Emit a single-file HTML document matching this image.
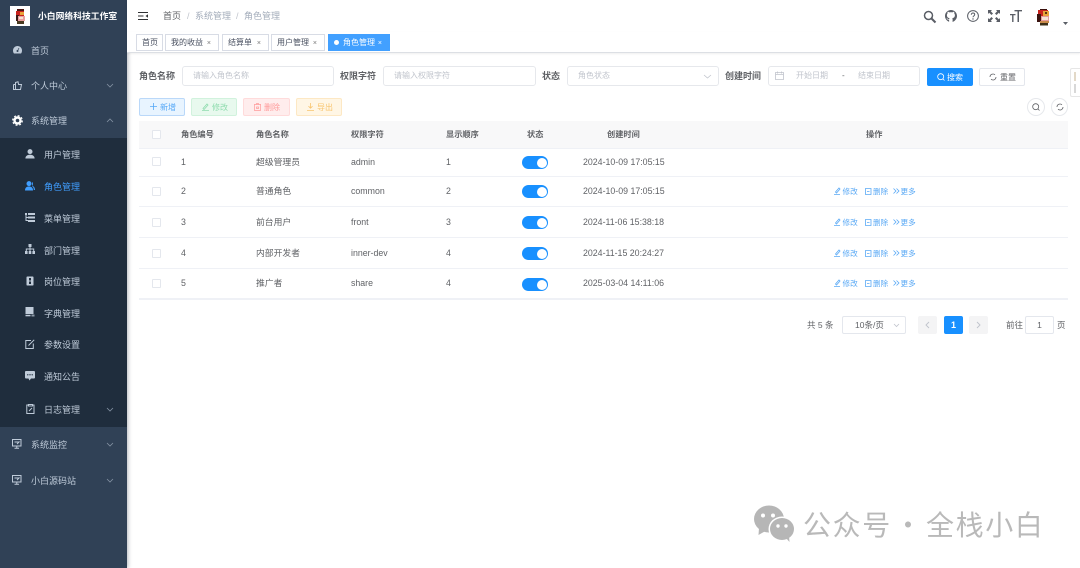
<!DOCTYPE html>
<html lang="zh-CN">
<head>
<meta charset="utf-8">
<title>角色管理</title>
<style>
*{box-sizing:border-box;margin:0;padding:0}
html,body{width:1080px;height:568px;overflow:hidden;background:#fff}
body{position:relative;font-family:"Liberation Sans","Noto Sans CJK SC",sans-serif;font-size:9px;color:#606266}
#w{position:absolute;left:0;top:0;width:1080px;height:568px;filter:blur(.3px)}
.a{position:absolute;white-space:nowrap;line-height:12px}
.box{position:absolute}
svg{position:absolute;overflow:visible}
#side{position:absolute;left:0;top:0;width:127px;height:568px;background:#304156;box-shadow:1px 0 4px rgba(0,21,41,.3)}
#sub{position:absolute;left:0;top:138px;width:127px;height:289px;background:#1f2d3d}
.m{position:absolute;color:#bfcbd9;white-space:nowrap;line-height:12px;font-size:9px}
.i{fill:#bfcbd9}
.l{fill:none;stroke:#bfcbd9;stroke-width:1}
.ch{fill:none;stroke:#8492a3;stroke-width:.8}
.tag{position:absolute;top:34px;height:17px;border:1px solid #d8dce5;background:#fff;color:#495060;font-size:8px;line-height:16px;padding-left:5px;white-space:nowrap}
.tag b{font-weight:400;position:absolute;right:7px;top:1px;color:#777;font-size:7px}
.inp{position:absolute;height:20px;top:66px;border:1px solid #e6e8ec;border-radius:3px;background:#fff;color:#c0c4cc;font-size:8px;line-height:18px;padding-left:10px;white-space:nowrap}
.lab{position:absolute;top:70px;font-weight:700;color:#606266;line-height:12px;font-size:9px;white-space:nowrap}
.btn{position:absolute;top:98px;height:18px;border-radius:2px;font-size:8px;line-height:16px;border:1px solid;white-space:nowrap}
.btn span{position:absolute;left:20px;top:1px}
.th{position:absolute;top:129px;font-weight:700;color:#606266;font-size:8.2px;line-height:12px;white-space:nowrap}
.td{position:absolute;color:#606266;font-size:8.8px;line-height:12px;white-space:nowrap}
.hr{position:absolute;left:139px;width:929px;height:1px;background:#eff1f6}
.cb{position:absolute;left:152px;width:9px;height:9px;border:1px solid #e4e7ed;border-radius:1px;background:#fff}
.sw{position:absolute;left:522px;width:26px;height:13px;border-radius:7px;background:#1890ff}
.sw i{position:absolute;right:1.5px;top:1.5px;width:10px;height:10px;border-radius:50%;background:#fff}
.act{position:absolute;color:#5aa9f5;font-size:7.6px;line-height:12px;white-space:nowrap}
.ai{fill:none;stroke:#5aa9f5;stroke-width:.8}
.pg{position:absolute;top:316px;width:19px;height:18px;border-radius:2px;background:#f4f4f5}
.wm{position:absolute;top:505px;font-family:"Noto Sans CJK SC","WenQuanYi Zen Hei",sans-serif;font-weight:400;font-size:28px;line-height:38px;color:#b9b9b9;white-space:nowrap;letter-spacing:1.6px}
</style>
</head>
<body>
<div id="w">

<div id="side">
  <div class="box" style="left:10px;top:6px;width:20px;height:20px;background:#fff"></div>
  <svg style="left:14px;top:9px" width="13" height="16" viewBox="0 0 13 16">
    <rect x="3" y="0" width="7" height="3" fill="#4a1512"/><rect x="2" y="2" width="8" height="5" fill="#c8221c"/><rect x="6" y="3" width="4" height="3" fill="#e8a33a"/><rect x="2" y="6" width="3" height="6" fill="#3b1a16"/><rect x="4" y="7" width="7" height="5" fill="#e8a0a0"/><rect x="5" y="8" width="4" height="2" fill="#f6e0d0"/><rect x="3" y="12" width="7" height="3" fill="#4a3a20"/>
  </svg>
  <div class="a" style="left:38px;top:10px;color:#fff;font-weight:700;font-size:8.8px">小白网络科技工作室</div>

  <svg style="left:13px;top:46px" width="9" height="8" viewBox="0 0 9 8"><path class="i" d="M4.500 0C2 0 0 2 0 4.500 0 6 .5 7 1 7.500h7c.5-.5 1-1.500 1-3C9 2 7 0 4.500 0z"/><circle cx="4.500" cy="5" r="1" fill="#304156"/><path d="M4.500 5L6 2" stroke="#304156" stroke-width=".7"/></svg>
  <div class="m" style="left:31px;top:45px">首页</div>

  <svg style="left:13px;top:81px" width="9" height="9" viewBox="0 0 9 9"><path class="l" d="M.5 3.500h2V1.500L5 .8l.6 2.700h2.900L7.500 8.500H2.500v-5M.5 3.500v5h2"/></svg>
  <div class="m" style="left:31px;top:80px">个人中心</div>
  <svg style="left:106px;top:83px" width="8" height="5" viewBox="0 0 8 5"><path class="ch" d="M1 1l3 3 3-3"/></svg>

  <svg style="left:12px;top:115px" width="11" height="11" viewBox="0 0 11 11"><circle cx="5.500" cy="5.500" r="3" fill="none" stroke="#fff" stroke-width="2.400"/><circle cx="5.500" cy="5.500" r="4.800" fill="none" stroke="#fff" stroke-width="1.200" stroke-dasharray="2 1.770"/></svg>
  <div class="m" style="left:31px;top:115px">系统管理</div>
  <svg style="left:106px;top:118px" width="8" height="5" viewBox="0 0 8 5"><path class="ch" d="M1 4l3-3 3 3"/></svg>

  <div id="sub"></div>

  <svg style="left:25px;top:149px" width="10" height="10" viewBox="0 0 10 10"><circle class="i" cx="5" cy="2.600" r="2.500"/><path class="i" d="M.4 9.500c0-2.500 1.900-3.800 4.600-3.800s4.600 1.300 4.600 3.800z"/></svg>
  <div class="m" style="left:44px;top:149px">用户管理</div>

  <svg style="left:25px;top:181px" width="10" height="10" viewBox="0 0 10 10"><circle fill="#409eff" cx="4" cy="2.600" r="2.500"/><path fill="#409eff" d="M0 9.500c0-2.800 1.500-4 4-4s4 1.200 4 4z"/><path fill="#409eff" d="M7 1c1.300.5 1.300 3 0 3.700C8.800 5 10 6.500 10 9H8.800C8.800 7 8 6 7 5z"/></svg>
  <div class="m" style="left:44px;top:181px;color:#409eff">角色管理</div>

  <svg style="left:25px;top:213px" width="10" height="9" viewBox="0 0 10 9"><rect class="i" x="0" y="0" width="2" height="2"/><rect class="i" x="3" y="0" width="7" height="2"/><rect class="i" x="3" y="3.500" width="7" height="2"/><rect class="i" x="3" y="7" width="7" height="2"/><path class="l" stroke-width=".7" d="M1 2v5.500h2M1 4.500h2"/></svg>
  <div class="m" style="left:44px;top:213px">菜单管理</div>

  <svg style="left:25px;top:244px" width="10" height="10" viewBox="0 0 10 10"><rect class="i" x="3.500" y="0" width="3" height="3"/><rect class="i" x="0" y="7" width="2.600" height="3"/><rect class="i" x="3.700" y="7" width="2.600" height="3"/><rect class="i" x="7.400" y="7" width="2.600" height="3"/><path class="l" stroke-width=".7" d="M5 3v4M1.300 7V5h7.400v2"/></svg>
  <div class="m" style="left:44px;top:245px">部门管理</div>

  <svg style="left:26px;top:276px" width="8" height="10" viewBox="0 0 8 10"><rect class="i" x="0.500" y="0.500" width="7" height="9" rx=".8"/><rect x="3" y="2" width="2" height="2.500" fill="#1f2d3d"/><rect x="3" y="5.500" width="2" height="2.500" fill="#1f2d3d"/></svg>
  <div class="m" style="left:44px;top:276px">岗位管理</div>

  <svg style="left:25px;top:307px" width="10" height="10" viewBox="0 0 10 10"><rect class="i" x="0.500" y="0" width="8" height="7"/><rect class="i" x="0.500" y="7.800" width="5" height="1.500"/><rect x="6.500" y="7.500" width="3" height="2" fill="#8c99a8"/></svg>
  <div class="m" style="left:44px;top:308px">字典管理</div>

  <svg style="left:25px;top:339px" width="10" height="10" viewBox="0 0 10 10"><path class="l" d="M6 1.500H.8v8h7.500V4.500"/><path class="l" d="M3.500 6.500L9.200.8"/></svg>
  <div class="m" style="left:44px;top:339px">参数设置</div>

  <svg style="left:25px;top:371px" width="10" height="10" viewBox="0 0 10 10"><path class="i" d="M1 0h8c.6 0 1 .4 1 1v5.500c0 .6-.4 1-1 1H6L4.500 9.500 3.500 7.500H1c-.6 0-1-.4-1-1V1c0-.6.4-1 1-1z"/><circle cx="2.800" cy="3.800" r=".7" fill="#1f2d3d"/><circle cx="5" cy="3.800" r=".7" fill="#1f2d3d"/><circle cx="7.200" cy="3.800" r=".7" fill="#1f2d3d"/></svg>
  <div class="m" style="left:44px;top:371px">通知公告</div>

  <svg style="left:26px;top:404px" width="9" height="10" viewBox="0 0 9 10"><path class="l" d="M2.500 1H.8v8.500h7.200V1H6.500M2.500.5h4v1.500h-4z"/><path class="l" d="M3 7l3-3"/></svg>
  <div class="m" style="left:44px;top:404px">日志管理</div>
  <svg style="left:106px;top:407px" width="8" height="5" viewBox="0 0 8 5"><path class="ch" d="M1 1l3 3 3-3"/></svg>

  <svg style="left:12px;top:439px" width="10" height="10" viewBox="0 0 10 10"><path class="l" d="M.5.500h8.500v6.500H.5z"/><path class="l" d="M2.500 9.200h4.500M4.800 7v2.200M2.500 3h4.500L5 5"/></svg>
  <div class="m" style="left:31px;top:439px">系统监控</div>
  <svg style="left:106px;top:442px" width="8" height="5" viewBox="0 0 8 5"><path class="ch" d="M1 1l3 3 3-3"/></svg>

  <svg style="left:12px;top:475px" width="10" height="10" viewBox="0 0 10 10"><path class="l" d="M.5.500h8.500v6.500H.5z"/><path class="l" d="M2.500 9.200h4.500M4.800 7v2.200M2.500 3h4.500L5 5"/></svg>
  <div class="m" style="left:31px;top:475px">小白源码站</div>
  <svg style="left:106px;top:478px" width="8" height="5" viewBox="0 0 8 5"><path class="ch" d="M1 1l3 3 3-3"/></svg>
</div>

<!-- navbar -->
<div class="box" style="left:127px;top:0;width:953px;height:32px;background:#fff;box-shadow:0 1px 3px rgba(0,21,41,.08)"></div>
<svg style="left:138px;top:12px" width="10" height="8" viewBox="0 0 10 8"><path d="M0 .5h10M0 7.500h10M0 4h5.500" stroke="#303133" stroke-width="1"/><path d="M10 2.300v3.400L7.500 4z" fill="#303133"/></svg>
<div class="a" style="left:163px;top:10px;color:#606266">首页</div>
<div class="a" style="left:187px;top:10px;color:#c0c4cc">/</div>
<div class="a" style="left:195px;top:10px;color:#a3acba">系统管理</div>
<div class="a" style="left:236px;top:10px;color:#c0c4cc">/</div>
<div class="a" style="left:244px;top:10px;color:#a3acba">角色管理</div>

<svg style="left:923px;top:10px" width="14" height="14" viewBox="0 0 14 14"><circle cx="5.500" cy="5.500" r="4" fill="none" stroke="#5a5e66" stroke-width="1.500"/><path d="M8.500 8.500l4 4" stroke="#5a5e66" stroke-width="2"/></svg>
<svg style="left:945px;top:10px" width="12" height="12" viewBox="0 0 12 12"><path fill="#5a5e66" d="M6 0C2.700 0 0 2.700 0 6c0 2.600 1.700 4.900 4.100 5.700v-1.900c-1.300.2-1.800-.3-2.100-1-.2-.4-.5-.7-.8-.9.700 0 1.300.5 1.600 1 .4.500 1 .5 1.400.2 0-.4.200-.7.400-.9-1.700-.3-2.700-1.200-2.700-3 0-.7.200-1.300.7-1.800-.2-.5-.1-1.200.1-1.700.7 0 1.200.3 1.700.7.800-.2 2.200-.2 3 0 .5-.4 1-.7 1.700-.7.200.5.300 1.200.1 1.700.5.500.7 1.100.7 1.800 0 1.800-1 2.700-2.700 3 .3.300.4.700.4 1.200v2.600C10.300 10.900 12 8.600 12 6c0-3.300-2.700-6-6-6z"/></svg>
<svg style="left:967px;top:10px" width="12" height="12" viewBox="0 0 12 12"><circle cx="6" cy="6" r="5.400" fill="none" stroke="#5a5e66" stroke-width="1"/><path d="M4.300 4.700C4.300 3.700 5 3 6 3s1.700.7 1.700 1.600c0 1.300-1.700 1.300-1.700 2.700" fill="none" stroke="#5a5e66" stroke-width="1"/><circle cx="6" cy="9" r=".7" fill="#5a5e66"/></svg>
<svg style="left:988px;top:10px" width="12" height="12" viewBox="0 0 12 12"><path d="M0 0h4L2.800 1.200 5 3.500 3.500 5 1.200 2.800 0 4zM12 0v4l-1.200-1.200L8.500 5 7 3.500l2.200-2.300L8 0zM0 12V8l1.200 1.200L3.500 7 5 8.500 2.800 10.800 4 12zM12 12H8l1.200-1.200L7 8.500 8.500 7l2.300 2.200L12 8z" fill="#5a5e66"/></svg>
<svg style="left:1010px;top:10px" width="12" height="12" viewBox="0 0 12 12"><path d="M4.500 0h7.500v1.400H9V12H7.500V1.400H4.500zM0 4h5.500v1.300H3.500V12H2.100V5.300H0z" fill="#5a5e66"/></svg>
<svg style="left:1037px;top:9px" width="14" height="17" viewBox="0 0 14 17">
  <rect x="3" y="0" width="7" height="2" fill="#3a0f0c"/><rect x="1" y="1" width="10" height="6" fill="#c8221c"/><rect x="6" y="2" width="6" height="5" fill="#e8a33a"/><rect x="8" y="3" width="2" height="2" fill="#5a3210"/><rect x="0" y="5" width="4" height="8" fill="#3b1410"/><rect x="4" y="7" width="8" height="5" fill="#e59a9a"/><rect x="5" y="8" width="6" height="3" fill="#f6e4d6"/><rect x="3" y="12" width="9" height="2" fill="#c98a4a"/><rect x="3" y="14" width="8" height="2.500" fill="#3e3018"/>
</svg>
<svg style="left:1063px;top:22px" width="5" height="3" viewBox="0 0 5 3"><path d="M0 0h5L2.500 3z" fill="#5a5e66"/></svg>

<!-- tags -->
<div class="box" style="left:127px;top:32px;width:953px;height:21px;background:#fff;border-bottom:1px solid #dcdfe4;box-shadow:0 1px 2px rgba(0,0,0,.07)"></div>
<div class="tag" style="left:136px;width:27px">首页</div>
<div class="tag" style="left:165px;width:54px">我的收益<b>×</b></div>
<div class="tag" style="left:222px;width:47px">结算单<b>×</b></div>
<div class="tag" style="left:271px;width:54px">用户管理<b>×</b></div>
<div class="tag" style="left:328px;width:62px;background:#42a0ff;border-color:#42a0ff;color:#fff;padding-left:14px">角色管理<b style="color:#fff">×</b><i style="position:absolute;left:5px;top:5px;width:5px;height:5px;border-radius:50%;background:#fff"></i></div>

<!-- form -->
<div class="lab" style="left:139px">角色名称</div>
<div class="inp" style="left:182px;width:152px">请输入角色名称</div>
<div class="lab" style="left:340px">权限字符</div>
<div class="inp" style="left:383px;width:153px">请输入权限字符</div>
<div class="lab" style="left:542px">状态</div>
<div class="inp" style="left:567px;width:152px">角色状态</div>
<svg style="left:703px;top:74px" width="9" height="5" viewBox="0 0 9 5"><path d="M1 1l3.500 3L8 1" fill="none" stroke="#c0c4cc" stroke-width=".8"/></svg>
<div class="lab" style="left:725px">创建时间</div>
<div class="inp" style="left:768px;width:152px"></div>
<svg style="left:775px;top:71px" width="9" height="9" viewBox="0 0 9 9"><path d="M.5 1.500h8v7h-8zM.5 3.500h8M2.500.5v2M6.500.5v2" fill="none" stroke="#c0c4cc" stroke-width=".8"/></svg>
<div class="a" style="left:796px;top:70px;font-size:8px;color:#c0c4cc">开始日期</div>
<div class="a" style="left:842px;top:70px;font-size:8px;color:#606266">-</div>
<div class="a" style="left:858px;top:70px;font-size:8px;color:#c0c4cc">结束日期</div>

<div class="btn" style="left:927px;top:68px;width:46px;background:#1890ff;border-color:#1890ff;color:#fff"><span style="left:19px">搜索</span></div>
<svg style="left:937px;top:73px" width="8" height="8" viewBox="0 0 8 8"><circle cx="3.700" cy="3.700" r="3" fill="none" stroke="#fff" stroke-width=".8"/><path d="M6 6l1.500 1.500" stroke="#fff" stroke-width=".8"/></svg>
<div class="btn" style="left:979px;top:68px;width:46px;background:#fff;border-color:#e4e7ed;color:#606266"><span style="left:20px">重置</span></div>
<svg style="left:989px;top:73px" width="8" height="8" viewBox="0 0 8 8"><path d="M1 4a3 3 0 0 1 5-2.200M7 4a3 3 0 0 1-5 2.200" fill="none" stroke="#606266" stroke-width=".8"/></svg>

<div class="box" style="left:1070px;top:68px;width:10px;height:29px;background:#fff;border:1px solid #e6e6e6;border-right:0;border-radius:2px 0 0 2px"></div>
<div class="box" style="left:1074px;top:72px;width:2px;height:9px;background:#e3d9c8"></div>
<div class="box" style="left:1074px;top:84px;width:2px;height:9px;background:#d8d8d8"></div>

<!-- toolbar -->
<div class="btn" style="left:139px;width:46px;background:#e8f4ff;border-color:#bad8f9;color:#56a8f7"><span>新增</span></div>
<svg style="left:150px;top:103px" width="7" height="7" viewBox="0 0 7 7"><path d="M3.500 0v7M0 3.500h7" stroke="#56a8f7" stroke-width=".8"/></svg>
<div class="btn" style="left:191px;width:46px;background:#e8f9ee;border-color:#d1f2dd;color:#8fdcae"><span>修改</span></div>
<svg style="left:202px;top:103px" width="7" height="8" viewBox="0 0 7 8"><path d="M1 5.500L5 1l1 1-4 4.500zM0 7.500h7" fill="none" stroke="#8fdcae" stroke-width=".8"/></svg>
<div class="btn" style="left:243px;width:47px;background:#ffeded;border-color:#ffdbdb;color:#ff9a9a"><span>删除</span></div>
<svg style="left:254px;top:103px" width="7" height="8" viewBox="0 0 7 8"><path d="M.5 1.500h6v6h-6zM0 1.500h7M2.500 1.500V.5h2v1M2.500 4h2v1.500h-2z" fill="none" stroke="#ff9a9a" stroke-width=".7"/></svg>
<div class="btn" style="left:296px;width:46px;background:#fff6e5;border-color:#fde8c4;color:#f8c56f"><span>导出</span></div>
<svg style="left:307px;top:103px" width="7" height="8" viewBox="0 0 7 8"><path d="M3.500 0v5M1.500 3.200l2 2 2-2M0 7.500h7" fill="none" stroke="#f8c56f" stroke-width=".8"/></svg>

<div class="box" style="left:1027px;top:98px;width:18px;height:18px;border:1px solid #e6e8ec;border-radius:50%"></div>
<svg style="left:1032px;top:103px" width="8" height="8" viewBox="0 0 8 8"><circle cx="3.700" cy="3.700" r="3" fill="none" stroke="#606266" stroke-width=".8"/><path d="M6 6l1.500 1.500" stroke="#606266" stroke-width=".8"/></svg>
<div class="box" style="left:1051px;top:98px;width:17px;height:18px;border:1px solid #e6e8ec;border-radius:50%"></div>
<svg style="left:1056px;top:103px" width="8" height="8" viewBox="0 0 8 8"><path d="M1 4a3 3 0 0 1 5-2.200M7 4a3 3 0 0 1-5 2.200" fill="none" stroke="#606266" stroke-width=".8"/></svg>

<!-- table -->
<div class="box" style="left:139px;top:121px;width:929px;height:27px;background:#f8f8f9"></div>
<div class="cb" style="top:130px"></div>
<div class="th" style="left:181px">角色编号</div>
<div class="th" style="left:256px">角色名称</div>
<div class="th" style="left:351px">权限字符</div>
<div class="th" style="left:446px">显示顺序</div>
<div class="th" style="left:527px">状态</div>
<div class="th" style="left:607px">创建时间</div>
<div class="th" style="left:866px">操作</div>

<div class="hr" style="top:148px"></div>
<div class="hr" style="top:176px"></div>
<div class="hr" style="top:206px"></div>
<div class="hr" style="top:237px"></div>
<div class="hr" style="top:268px"></div>
<div class="hr" style="top:298px;height:2px"></div>

<!-- row 1 -->
<div class="cb" style="top:157px"></div>
<div class="td" style="left:181px;top:156px">1</div>
<div class="td" style="left:256px;top:156px">超级管理员</div>
<div class="td" style="left:351px;top:156px">admin</div>
<div class="td" style="left:446px;top:156px">1</div>
<div class="sw" style="top:156px"><i></i></div>
<div class="td" style="left:583px;top:156px">2024-10-09 17:05:15</div>

<!-- row 2 -->
<div class="cb" style="top:187px"></div>
<div class="td" style="left:181px;top:185px">2</div>
<div class="td" style="left:256px;top:185px">普通角色</div>
<div class="td" style="left:351px;top:185px">common</div>
<div class="td" style="left:446px;top:185px">2</div>
<div class="sw" style="top:185px"><i></i></div>
<div class="td" style="left:583px;top:185px">2024-10-09 17:05:15</div>
<svg style="left:834px;top:187px" width="7" height="8" viewBox="0 0 7 8"><path class="ai" d="M1.500 5L5 1l1 1-3.500 4zM0 7.500h6"/></svg>
<div class="act" style="left:842.500px;top:185.500px">修改</div>
<svg style="left:865px;top:187px" width="7" height="8" viewBox="0 0 7 8"><path class="ai" d="M.5 1.500h5.500v6H.5zM2 4.500h2.500"/></svg>
<div class="act" style="left:873px;top:185.500px">删除</div>
<svg style="left:893px;top:188px" width="7" height="6" viewBox="0 0 7 6"><path class="ai" d="M.5.500L3 3 .5 5.500M3.500.500L6 3 3.500 5.500"/></svg>
<div class="act" style="left:900.500px;top:185.500px">更多</div>

<!-- row 3 -->
<div class="cb" style="top:218px"></div>
<div class="td" style="left:181px;top:216px">3</div>
<div class="td" style="left:256px;top:216px">前台用户</div>
<div class="td" style="left:351px;top:216px">front</div>
<div class="td" style="left:446px;top:216px">3</div>
<div class="sw" style="top:216px"><i></i></div>
<div class="td" style="left:583px;top:216px">2024-11-06 15:38:18</div>
<svg style="left:834px;top:218px" width="7" height="8" viewBox="0 0 7 8"><path class="ai" d="M1.500 5L5 1l1 1-3.500 4zM0 7.500h6"/></svg>
<div class="act" style="left:842.500px;top:216.500px">修改</div>
<svg style="left:865px;top:218px" width="7" height="8" viewBox="0 0 7 8"><path class="ai" d="M.5 1.500h5.500v6H.5zM2 4.500h2.500"/></svg>
<div class="act" style="left:873px;top:216.500px">删除</div>
<svg style="left:893px;top:219px" width="7" height="6" viewBox="0 0 7 6"><path class="ai" d="M.5.500L3 3 .5 5.500M3.500.500L6 3 3.500 5.500"/></svg>
<div class="act" style="left:900.500px;top:216.500px">更多</div>

<!-- row 4 -->
<div class="cb" style="top:249px"></div>
<div class="td" style="left:181px;top:247px">4</div>
<div class="td" style="left:256px;top:247px">内部开发者</div>
<div class="td" style="left:351px;top:247px">inner-dev</div>
<div class="td" style="left:446px;top:247px">4</div>
<div class="sw" style="top:247px"><i></i></div>
<div class="td" style="left:583px;top:247px">2024-11-15 20:24:27</div>
<svg style="left:834px;top:249px" width="7" height="8" viewBox="0 0 7 8"><path class="ai" d="M1.500 5L5 1l1 1-3.500 4zM0 7.500h6"/></svg>
<div class="act" style="left:842.500px;top:247.500px">修改</div>
<svg style="left:865px;top:249px" width="7" height="8" viewBox="0 0 7 8"><path class="ai" d="M.5 1.500h5.500v6H.5zM2 4.500h2.500"/></svg>
<div class="act" style="left:873px;top:247.500px">删除</div>
<svg style="left:893px;top:250px" width="7" height="6" viewBox="0 0 7 6"><path class="ai" d="M.5.500L3 3 .5 5.500M3.500.500L6 3 3.500 5.500"/></svg>
<div class="act" style="left:900.500px;top:247.500px">更多</div>

<!-- row 5 -->
<div class="cb" style="top:279px"></div>
<div class="td" style="left:181px;top:277px">5</div>
<div class="td" style="left:256px;top:277px">推广者</div>
<div class="td" style="left:351px;top:277px">share</div>
<div class="td" style="left:446px;top:277px">4</div>
<div class="sw" style="top:278px"><i></i></div>
<div class="td" style="left:583px;top:277px">2025-03-04 14:11:06</div>
<svg style="left:834px;top:279px" width="7" height="8" viewBox="0 0 7 8"><path class="ai" d="M1.500 5L5 1l1 1-3.500 4zM0 7.500h6"/></svg>
<div class="act" style="left:842.500px;top:277.500px">修改</div>
<svg style="left:865px;top:279px" width="7" height="8" viewBox="0 0 7 8"><path class="ai" d="M.5 1.500h5.500v6H.5zM2 4.500h2.500"/></svg>
<div class="act" style="left:873px;top:277.500px">删除</div>
<svg style="left:893px;top:280px" width="7" height="6" viewBox="0 0 7 6"><path class="ai" d="M.5.500L3 3 .5 5.500M3.500.500L6 3 3.500 5.500"/></svg>
<div class="act" style="left:900.500px;top:277.500px">更多</div>

<!-- pagination -->
<div class="a" style="left:807px;top:319px;font-size:8.5px">共 5 条</div>
<div class="box" style="left:842px;top:316px;width:64px;height:18px;border:1px solid #e4e7ed;border-radius:2px"></div>
<div class="a" style="left:855px;top:319px;font-size:8.5px">10条/页</div>
<svg style="left:893px;top:323px" width="7" height="5" viewBox="0 0 7 5"><path d="M1 1l2.500 2.500L6 1" fill="none" stroke="#c0c4cc" stroke-width=".8"/></svg>
<div class="pg" style="left:918px"></div>
<svg style="left:925px;top:321px" width="5" height="8" viewBox="0 0 5 8"><path d="M4 1L1 4l3 3" fill="none" stroke="#c0c4cc" stroke-width=".9"/></svg>
<div class="pg" style="left:944px;background:#1890ff;color:#fff;font-weight:700;text-align:center;line-height:18px;font-size:9px">1</div>
<div class="pg" style="left:969px"></div>
<svg style="left:976px;top:321px" width="5" height="8" viewBox="0 0 5 8"><path d="M1 1l3 3-3 3" fill="none" stroke="#c0c4cc" stroke-width=".9"/></svg>
<div class="a" style="left:1006px;top:319px;font-size:8.5px">前往</div>
<div class="box" style="left:1025px;top:316px;width:29px;height:18px;border:1px solid #e4e7ed;border-radius:2px;text-align:center;line-height:16px;font-size:8.5px">1</div>
<div class="a" style="left:1057px;top:319px;font-size:8.5px">页</div>

</div>

<!-- watermark -->
<svg style="left:753px;top:505px" width="42" height="37" viewBox="0 0 42 37">
  <ellipse cx="16" cy="14" rx="15" ry="13.500" fill="#b6b6b6"/>
  <path d="M6 23l-.5 7 7-4z" fill="#b6b6b6"/>
  <circle cx="10" cy="10.500" r="2" fill="#fff"/><circle cx="20" cy="10.500" r="2" fill="#fff"/>
  <ellipse cx="29" cy="24" rx="13.500" ry="12.500" fill="#fff"/>
  <ellipse cx="29" cy="24" rx="12" ry="11" fill="#b6b6b6"/>
  <path d="M33 33l3.500 4-.5-6z" fill="#b6b6b6"/>
  <circle cx="25" cy="21" r="1.700" fill="#fff"/><circle cx="33" cy="21" r="1.700" fill="#fff"/>
</svg>
<div class="wm" style="left:803px">公众号</div>
<div class="wm" style="left:894px">·</div>
<div class="wm" style="left:926px">全栈小白</div>

</body>
</html>
